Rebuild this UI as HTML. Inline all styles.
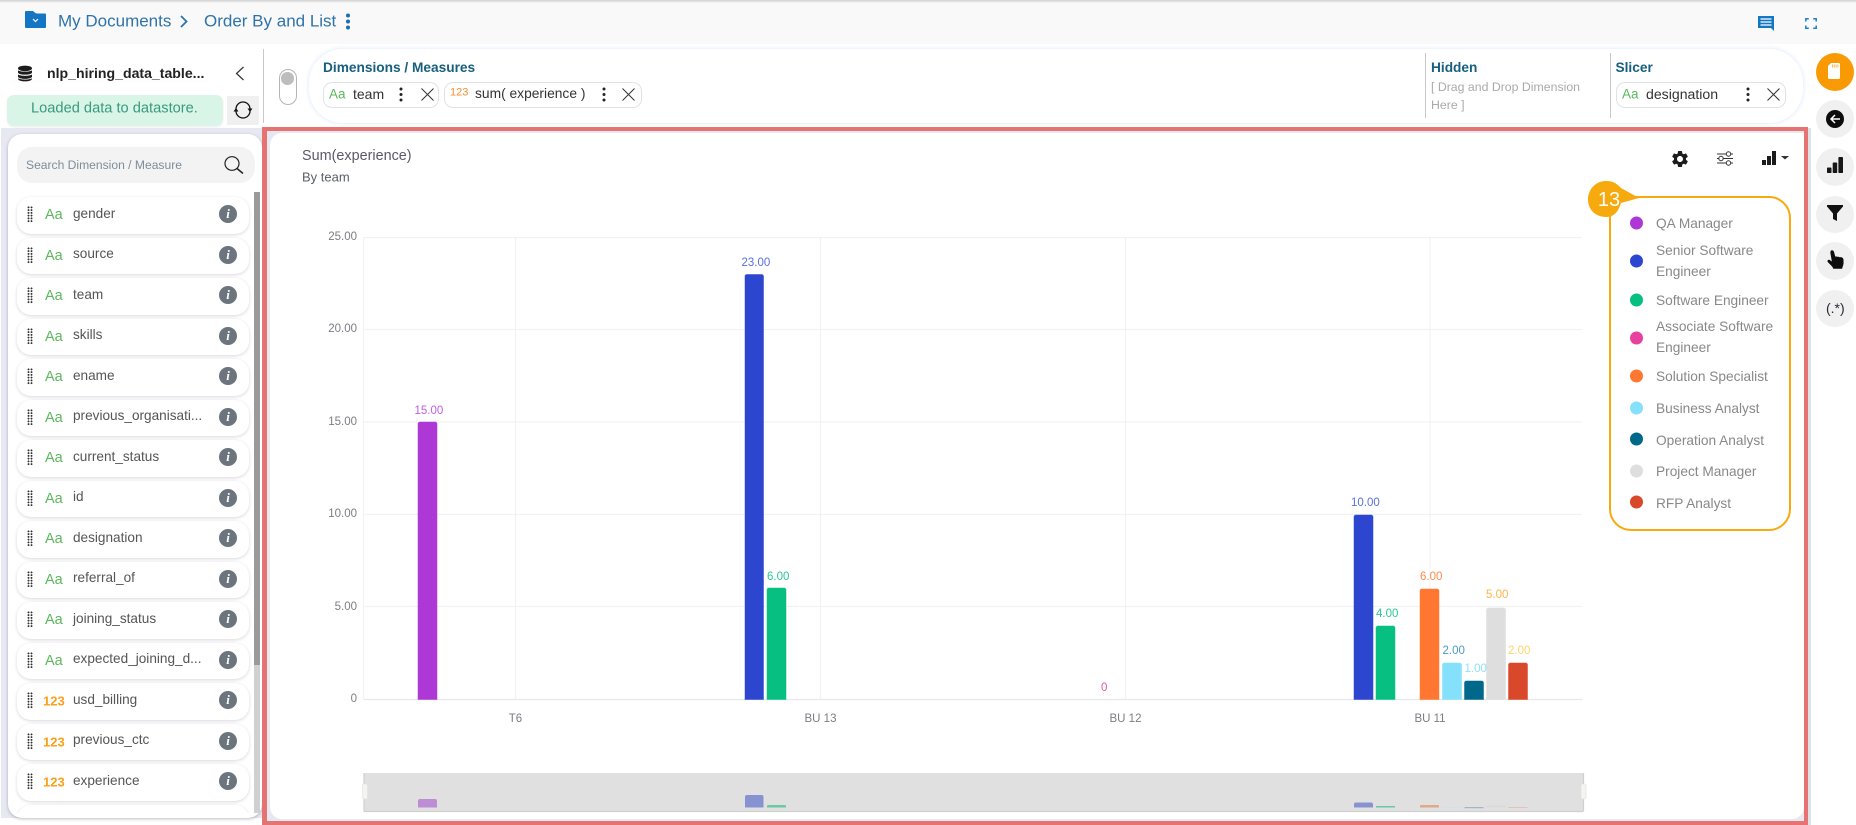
<!DOCTYPE html>
<html lang="en"><head><meta charset="utf-8"><title>Order By and List</title>
<style>
html,body{margin:0;padding:0;width:1856px;height:825px;overflow:hidden;background:#fff;font-family:"Liberation Sans",sans-serif}
.a{position:absolute}
.t{position:absolute;white-space:nowrap;line-height:1;transform:translateY(-50%)}
.chip{position:absolute;height:26px;top:82px;background:#fff;border:1px solid #dfe3e6;border-radius:9px;box-sizing:border-box}
.item{position:absolute;left:9px;width:232px;height:36.5px;background:#fff;border-radius:14px;box-shadow:0 1px 3px rgba(60,60,80,.2)}
.item .dots{position:absolute;left:10px;top:9px;width:6px;height:16.500px;background-image:radial-gradient(circle,#333 .85px,transparent 1.05px);background-size:3px 2.750px}
.item .ty{position:absolute;top:18px;transform:translateY(-50%);line-height:1}
.aa{left:28px;font-size:14.500px;color:#5cb85c}
.n{left:26px;font-size:13px;font-weight:bold;color:#f9a01b}
.item .nm{position:absolute;left:56px;top:16.500px;transform:translateY(-50%);font-size:13.600px;line-height:1;color:#555;white-space:nowrap}
.item .i{position:absolute;left:202px;top:8px;width:18px;height:18px;border-radius:50%;background:#6c757d;color:#fff;font:italic bold 13px/18px "Liberation Serif",serif;text-align:center}
.circ{position:absolute;left:1816px;width:38px;height:38px;border-radius:50%;background:#f0f0f0}
.lg{position:absolute;left:1656px;font-size:13.700px;line-height:1;color:#888;white-space:nowrap;transform:translateY(-50%)}
.dot{position:absolute;left:1630px;width:13px;height:13px;border-radius:50%;transform:translateY(-50%)}
</style></head><body>

<!-- top bar -->
<div class="a" style="left:0;top:0;width:1856px;height:44px;background:#f9f9f9"></div>
<div class="a" style="left:0;top:0;width:1856px;height:3px;background:linear-gradient(#cfcfcf,#f9f9f9)"></div>
<svg class="a" style="left:25px;top:11px" width="21" height="17" viewBox="0 0 21 17"><path d="M1 0h7l3 2.500h9a1 1 0 0 1 1 1V16a1 1 0 0 1-1 1H1a1 1 0 0 1-1-1V1a1 1 0 0 1 1-1z" fill="#1376c4"/><path d="M8 8l2.500 2.500L13 8" fill="none" stroke="#fff" stroke-width="1.200"/></svg>
<div class="t" style="left:58px;top:21px;font-size:17px;color:#2e73ab">My Documents</div>
<svg class="a" style="left:180px;top:15px" width="8" height="13" viewBox="0 0 8 13"><path d="M1 1l5.500 5.500L1 12" fill="none" stroke="#2e73ab" stroke-width="1.800"/></svg>
<div class="t" style="left:204px;top:21px;font-size:17px;color:#2e73ab">Order By and List</div>
<svg class="a" style="left:345px;top:13px" width="6" height="17" viewBox="0 0 6 17"><circle cx="3" cy="2.500" r="2" fill="#1a6fb0"/><circle cx="3" cy="8.500" r="2" fill="#1a6fb0"/><circle cx="3" cy="14.500" r="2" fill="#1a6fb0"/></svg>
<svg class="a" style="left:1758px;top:16px" width="16" height="15" viewBox="0 0 16 15"><path d="M0 0h16v15l-3-3H0z" fill="#1377c4"/><path d="M2.500 3h11M2.500 6h11M2.500 9h11" stroke="#fff" stroke-width="1.200"/></svg>
<svg class="a" style="left:1805px;top:18px" width="12" height="11" viewBox="0 0 12 11"><path d="M.8 3.500V.8h3M8.200.8h3v2.700M11.200 7.500v2.700h-3M3.800 10.200h-3V7.500" fill="none" stroke="#1e7fd0" stroke-width="1.500"/></svg>

<!-- left header -->
<svg class="a" style="left:17.500px;top:65px" width="14" height="17" viewBox="0 0 15 17"><ellipse cx="7.500" cy="3" rx="7.500" ry="3" fill="#1c1c1c"/><path d="M0 5c1.500 2 13.500 2 15 0v2.500c-1 3-14 3-15 0zM0 9.500c1.500 2 13.500 2 15 0V12c-1 3-14 3-15 0z" fill="#1c1c1c"/><path d="M0 13.500c1.500 2 13.500 2 15 0V14c0 4-15 4-15 0z" fill="#1c1c1c"/></svg>
<div class="t" style="left:47px;top:73px;font-size:14.100px;font-weight:bold;color:#222">nlp_hiring_data_table...</div>
<svg class="a" style="left:235px;top:66px" width="10" height="15" viewBox="0 0 10 15"><path d="M8.500 1L1.500 7.500l7 6.500" fill="none" stroke="#333" stroke-width="1.200"/></svg>
<div class="a" style="left:6.500px;top:95px;width:216.500px;height:30.500px;border-radius:7px;background:#d8f5e8;box-shadow:0 1px 2px rgba(0,0,0,.08)"></div>
<div class="t" style="left:31px;top:109px;font-size:14.650px;color:#3a9a7c">Loaded data to datastore.</div>
<div class="a" style="left:227px;top:96px;width:32px;height:29px;background:#f0f0f0"></div>
<svg class="a" style="left:234px;top:101.500px;overflow:visible" width="18" height="16" viewBox="0 0 18 16"><path d="M2 7A7 7 0 0 1 16 7M16 9A7 7 0 0 1 2 9" fill="none" stroke="#111" stroke-width="1.300"/><path d="M13.500 6.500h5L16 10zM-.5 9.500h5L2 6z" fill="#111"/></svg>
<div class="a" style="left:263px;top:49px;width:1px;height:74px;background:#c9c9c9"></div>

<!-- toggle -->
<div class="a" style="left:278.500px;top:69px;width:18px;height:36px;border:1px solid #b5b5b5;border-radius:9px;box-sizing:border-box;background:#fff"></div>
<div class="a" style="left:281px;top:72px;width:12.500px;height:12.500px;border-radius:50%;background:#bdbdbd"></div>

<!-- drop panel -->
<div class="a" style="left:309px;top:49px;width:1494px;height:74px;border-radius:34px;background:#fff;box-shadow:0 0 4px 1px #e6eefa"></div>
<div class="t" style="left:323px;top:68px;font-size:13.700px;font-weight:bold;color:#17607f">Dimensions / Measures</div>
<div class="chip" style="left:323px;width:116px"></div>
<div class="t" style="left:329px;top:94px;font-size:13.500px;color:#5cb85c">Aa</div>
<div class="t" style="left:353px;top:94px;font-size:14px;color:#333">team</div>
<svg class="a" style="left:399px;top:87px" width="4" height="15" viewBox="0 0 4 15"><circle cx="2" cy="2" r="1.500" fill="#222"/><circle cx="2" cy="7.500" r="1.500" fill="#222"/><circle cx="2" cy="13" r="1.500" fill="#222"/></svg>
<svg class="a" style="left:421px;top:88px" width="13" height="13" viewBox="0 0 13 13"><path d="M.5.5l12 12M12.500.5l-12 12" stroke="#333" stroke-width="1"/></svg>
<div class="chip" style="left:444px;width:198px"></div>
<div class="t" style="left:450px;top:92.500px;font-size:11px;color:#f98c34">123</div>
<div class="t" style="left:475px;top:94px;font-size:13.800px;color:#333">sum( experience )</div>
<svg class="a" style="left:602px;top:87px" width="4" height="15" viewBox="0 0 4 15"><circle cx="2" cy="2" r="1.500" fill="#222"/><circle cx="2" cy="7.500" r="1.500" fill="#222"/><circle cx="2" cy="13" r="1.500" fill="#222"/></svg>
<svg class="a" style="left:622px;top:88px" width="13" height="13" viewBox="0 0 13 13"><path d="M.5.5l12 12M12.500.5l-12 12" stroke="#333" stroke-width="1"/></svg>

<div class="a" style="left:1425px;top:53px;width:1px;height:65px;background:#c8c8c8"></div>
<div class="t" style="left:1431px;top:68px;font-size:13.700px;font-weight:bold;color:#17607f">Hidden</div>
<div class="t" style="left:1431px;top:87px;font-size:12.300px;color:#aaa">[ Drag and Drop Dimension</div>
<div class="t" style="left:1431px;top:105px;font-size:12.300px;color:#aaa">Here ]</div>
<div class="a" style="left:1610px;top:53px;width:1px;height:65px;background:#c8c8c8"></div>
<div class="t" style="left:1615.500px;top:68px;font-size:13.700px;font-weight:bold;color:#17607f">Slicer</div>
<div class="chip" style="left:1615.500px;width:170.500px"></div>
<div class="t" style="left:1622px;top:94px;font-size:13.500px;color:#5cb85c">Aa</div>
<div class="t" style="left:1646px;top:93.500px;font-size:14.100px;color:#333">designation</div>
<svg class="a" style="left:1746px;top:87px" width="4" height="15" viewBox="0 0 4 15"><circle cx="2" cy="2" r="1.500" fill="#222"/><circle cx="2" cy="7.500" r="1.500" fill="#222"/><circle cx="2" cy="13" r="1.500" fill="#222"/></svg>
<svg class="a" style="left:1767px;top:88px" width="13" height="13" viewBox="0 0 13 13"><path d="M.5.5l12 12M12.500.5l-12 12" stroke="#333" stroke-width="1"/></svg>

<!-- left fields panel -->
<div class="a" style="left:1px;top:128px;width:262px;height:690px;background:#e6e8f2"></div>
<div class="a" style="left:8px;top:134px;width:254px;height:684px;background:#fff;border-radius:14px;box-shadow:0 1px 3px rgba(70,70,90,.35);overflow:hidden">
 <div class="a" style="left:9px;top:13px;width:238px;height:36px;background:#f3f3f3;border-radius:15px"></div>
 <div class="t" style="left:18px;top:31px;font-size:12.100px;color:#7f8c99">Search Dimension / Measure</div>
 <svg class="a" style="left:216px;top:22px" width="20" height="18" viewBox="0 0 20 18"><ellipse cx="8" cy="7.500" rx="7" ry="6.800" fill="none" stroke="#222" stroke-width="1.200"/><path d="M13 12.500l6 5" stroke="#222" stroke-width="1.500"/></svg>
 <div class="a" style="left:246px;top:58px;width:6px;height:621px;background:#d0d0d0"></div>
 <div class="a" style="left:246px;top:58px;width:6px;height:473px;background:#9a9a9a"></div>
 <div class="a" style="left:0;top:0;width:246px;height:679px;overflow:hidden">
  <div class="item" style="top:63px"><span class="dots"></span><span class="ty aa">Aa</span><span class="nm">gender</span><span class="i">i</span></div>
  <div class="item" style="top:103.500px"><span class="dots"></span><span class="ty aa">Aa</span><span class="nm">source</span><span class="i">i</span></div>
  <div class="item" style="top:144px"><span class="dots"></span><span class="ty aa">Aa</span><span class="nm">team</span><span class="i">i</span></div>
  <div class="item" style="top:184.500px"><span class="dots"></span><span class="ty aa">Aa</span><span class="nm">skills</span><span class="i">i</span></div>
  <div class="item" style="top:225px"><span class="dots"></span><span class="ty aa">Aa</span><span class="nm">ename</span><span class="i">i</span></div>
  <div class="item" style="top:265.500px"><span class="dots"></span><span class="ty aa">Aa</span><span class="nm">previous_organisati...</span><span class="i">i</span></div>
  <div class="item" style="top:306px"><span class="dots"></span><span class="ty aa">Aa</span><span class="nm">current_status</span><span class="i">i</span></div>
  <div class="item" style="top:346.500px"><span class="dots"></span><span class="ty aa">Aa</span><span class="nm">id</span><span class="i">i</span></div>
  <div class="item" style="top:387px"><span class="dots"></span><span class="ty aa">Aa</span><span class="nm">designation</span><span class="i">i</span></div>
  <div class="item" style="top:427.500px"><span class="dots"></span><span class="ty aa">Aa</span><span class="nm">referral_of</span><span class="i">i</span></div>
  <div class="item" style="top:468px"><span class="dots"></span><span class="ty aa">Aa</span><span class="nm">joining_status</span><span class="i">i</span></div>
  <div class="item" style="top:508.500px"><span class="dots"></span><span class="ty aa">Aa</span><span class="nm">expected_joining_d...</span><span class="i">i</span></div>
  <div class="item" style="top:549px"><span class="dots"></span><span class="ty n">123</span><span class="nm">usd_billing</span><span class="i">i</span></div>
  <div class="item" style="top:589.500px"><span class="dots"></span><span class="ty n">123</span><span class="nm">previous_ctc</span><span class="i">i</span></div>
  <div class="item" style="top:630px"><span class="dots"></span><span class="ty n">123</span><span class="nm">experience</span><span class="i">i</span></div>
  <div class="item" style="top:670.500px"><span class="i"></span></div>
 </div>
</div>

<!-- red frame and chart card -->
<div class="a" style="left:1808px;top:128px;width:3px;height:697px;background:#dde1ec"></div>
<div class="a" style="left:262px;top:127px;width:1546px;height:698px;box-sizing:border-box;border:solid #e77272;border-width:4px 4.500px 4.500px 5px;background:#e6e8f2"></div>
<div class="a" style="left:270px;top:133px;width:1534px;height:686px;background:#fff;border-radius:12px 0 12px 12px"></div>
<div class="t" style="left:302px;top:156px;font-size:14.400px;color:#5a5a6a">Sum(experience)</div>
<div class="t" style="left:302px;top:177px;font-size:13px;color:#5a6068">By team</div>

<svg class="a" style="left:0;top:0;pointer-events:none" width="1856" height="825" viewBox="0 0 1856 825" font-family="Liberation Sans, sans-serif">
 <g stroke="#f2f2f2" stroke-width="1.200" fill="none">
  <path d="M363.500 237.500H1582M363.500 329.500H1582M363.500 422H1582M363.500 514.500H1582M363.500 606.500H1582"/>
  <path d="M363.500 237V699M515.500 237V699M820.500 237V699M1125.500 237V699M1430 237V699"/>
  <path d="M363.500 699.500H1582" stroke="#e8e8e8"/>
 </g>
 <g font-size="11.500" fill="#7c7c84" text-anchor="end">
  <text x="357" y="240">25.00</text><text x="357" y="332">20.00</text><text x="357" y="425">15.00</text><text x="357" y="517">10.00</text><text x="357" y="610">5.00</text><text x="357" y="702">0</text>
 </g>
 <g font-size="11.500" fill="#7c7c84" text-anchor="middle">
  <text x="515.500" y="722">T6</text><text x="820.500" y="722">BU 13</text><text x="1125.500" y="722">BU 12</text><text x="1430" y="722">BU 11</text>
 </g>
 <g stroke-width="1" stroke-opacity=".5">
  <path d="M418 699.500V424a2 2 0 0 1 2-2h15a2 2 0 0 1 2 2v275.500z" fill="#ae38d6" stroke="#ae38d6"/>
  <path d="M745 699.500V276.500a2 2 0 0 1 2-2h14.500a2 2 0 0 1 2 2v423z" fill="#2c46cf" stroke="#2c46cf"/>
  <path d="M767 699.500V590a2 2 0 0 1 2-2h15a2 2 0 0 1 2 2v109.500z" fill="#07bf80" stroke="#07bf80"/>
  <path d="M1354 699.500V517a2 2 0 0 1 2-2h15a2 2 0 0 1 2 2v182.500z" fill="#2c46cf" stroke="#2c46cf"/>
  <path d="M1376 699.500V628a2 2 0 0 1 2-2h15a2 2 0 0 1 2 2v71.500z" fill="#07bf80" stroke="#07bf80"/>
  <path d="M1420 699.500V591a2 2 0 0 1 2-2h15a2 2 0 0 1 2 2v108.500z" fill="#ff7731" stroke="#ff7731"/>
  <path d="M1442.500 699.500V665a2 2 0 0 1 2-2h15a2 2 0 0 1 2 2v34.500z" fill="#85e0fc" stroke="#85e0fc"/>
  <path d="M1464.500 699.500V683a2 2 0 0 1 2-2h15a2 2 0 0 1 2 2v16.500z" fill="#00688b" stroke="#00688b"/>
  <path d="M1486.500 699.500V610a2 2 0 0 1 2-2h15a2 2 0 0 1 2 2v89.500z" fill="#dedede" stroke="#dedede"/>
  <path d="M1508.500 699.500V665a2 2 0 0 1 2-2h15a2 2 0 0 1 2 2v34.500z" fill="#d9482a" stroke="#d9482a"/>
 </g>
 <g font-size="11.500">
  <text x="414.500" y="414" fill="#c060e0">15.00</text>
  <text x="741.500" y="266" fill="#5a70dc">23.00</text>
  <text x="767" y="580" fill="#2bc795">6.00</text>
  <text x="1101" y="691" fill="#e8559f">0</text>
  <text x="1351" y="506" fill="#5a70dc">10.00</text>
  <text x="1376" y="617" fill="#2bc795">4.00</text>
  <text x="1420" y="580" fill="#ff8a4f">6.00</text>
  <text x="1442.500" y="654" fill="#4a9acb">2.00</text>
  <text x="1464.500" y="672" fill="#8ee0fb">1.00</text>
  <text x="1486" y="598" fill="#ffb347">5.00</text>
  <text x="1508" y="654" fill="#ffd36b">2.00</text>
 </g>
 <!-- navigator -->
 <rect x="363.500" y="773" width="1220" height="38" fill="#e0e0e0"/>
 <path d="M363.500 811.500H1583.500M364 773V811M1583.500 773V811" stroke="#d0d0d0" stroke-width="1.200"/>
 <g>
  <path d="M418 807.500V801a2 2 0 0 1 2-2h15a2 2 0 0 1 2 2v6.500z" fill="#bd8ed4"/>
  <path d="M745 807.500V797a2 2 0 0 1 2-2h14.500a2 2 0 0 1 2 2v10.500z" fill="#8793d0"/>
  <path d="M767 807.500V806a1 1 0 0 1 1-1h17a1 1 0 0 1 1 1v1.500z" fill="#6cc9a5"/>
  <path d="M1354 807.500V804.500a2 2 0 0 1 2-2h15a2 2 0 0 1 2 2v3z" fill="#8793d0"/>
  <rect x="1376" y="806" width="19" height="1.500" fill="#6cc9a5"/>
  <path d="M1420 807.500V806a1 1 0 0 1 1-1h17a1 1 0 0 1 1 1v1.500z" fill="#e0a98a"/>
  <rect x="1442.500" y="807" width="19" height="1" fill="#cfe2e8"/>
  <rect x="1464.500" y="807" width="19" height="1.200" fill="#9bbbc4"/>
  <rect x="1486.500" y="805.500" width="19" height="2" fill="#dadada"/>
  <rect x="1508.500" y="807" width="19" height="1" fill="#e0c4bb"/>
 </g>
 <rect x="362.500" y="784" width="5" height="15" rx="1" fill="#f4f4f0" stroke="#ddd" stroke-width=".5"/>
 <rect x="1581" y="784" width="5" height="15" rx="1" fill="#f4f4f0" stroke="#ddd" stroke-width=".5"/>
 <!-- chart toolbar -->
 <svg x="1670" y="149" width="20" height="20" viewBox="0 0 24 24"><path fill="#1c1c1c" d="M19.140 12.940c.04-.3.06-.61.06-.94 0-.32-.02-.64-.07-.94l2.030-1.580c.18-.14.23-.41.12-.61l-1.920-3.320c-.12-.22-.37-.29-.59-.22l-2.390.96c-.5-.38-1.030-.7-1.620-.94l-.36-2.540c-.04-.24-.24-.41-.48-.41h-3.840c-.24 0-.43.17-.47.41l-.36 2.540c-.59.24-1.130.57-1.620.94l-2.390-.96c-.22-.08-.47 0-.59.22L2.740 8.870c-.12.21-.08.47.12.61l2.030 1.580c-.05.3-.09.63-.09.94s.02.64.07.94l-2.030 1.580c-.18.14-.23.41-.12.61l1.920 3.320c.12.22.37.29.59.22l2.390-.96c.5.38 1.030.7 1.620.94l.36 2.540c.05.24.24.41.48.41h3.840c.24 0 .44-.17.47-.41l.36-2.540c.59-.24 1.130-.56 1.620-.94l2.390.96c.22.08.47 0 .59-.22l1.920-3.320c.12-.22.07-.47-.12-.61l-2.010-1.580zM12 15.600c-1.980 0-3.600-1.620-3.600-3.600s1.620-3.600 3.600-3.600 3.600 1.620 3.600 3.600-1.620 3.600-3.600 3.600z"/></svg>
 <g fill="none" stroke="#333" stroke-width="1">
  <path d="M1717 154h9.500M1731 154h2M1717 158.500h2M1723.500 158.500h9.500M1717 163h9.500M1731 163h2"/>
  <circle cx="1728.500" cy="154" r="2.200"/><circle cx="1721" cy="158.500" r="2.200"/><circle cx="1728.500" cy="163" r="2.200"/>
 </g>
 <path d="M1762 160h4v5h-4zM1767 156h4v9h-4zM1772 151h4v14h-4z" fill="#1c1c1c"/>
 <path d="M1781 156h8l-4 3.500z" fill="#333"/>
</svg>

<!-- legend -->
<div class="a" style="left:1609px;top:195.500px;width:181.500px;height:335px;box-sizing:border-box;border:2.500px solid #f8a90d;border-radius:22px;background:#fff"></div>
<svg class="a" style="left:1588px;top:181px" width="52" height="37" viewBox="0 0 52 37"><path d="M0 18.500C0 8 8 0 18 0c8 0 11 3 15 7l18 10-18 5C30 32 25 36 18 36 8 36 0 29 0 18.500z" fill="#f7aa0e"/><text x="21" y="25" text-anchor="middle" font-family="Liberation Sans, sans-serif" font-size="20" fill="#fff">13</text></svg>
<span class="dot" style="top:223px;background:#ae38d6"></span><div class="lg" style="top:224px">QA Manager</div>
<span class="dot" style="top:261px;background:#2c46cf"></span><div class="lg" style="top:251px">Senior Software</div><div class="lg" style="top:271.500px">Engineer</div>
<span class="dot" style="top:300px;background:#07bf80"></span><div class="lg" style="top:300.500px">Software Engineer</div>
<span class="dot" style="top:338px;background:#e8409f"></span><div class="lg" style="top:327px">Associate Software</div><div class="lg" style="top:347.500px">Engineer</div>
<span class="dot" style="top:376px;background:#ff7731"></span><div class="lg" style="top:377px">Solution Specialist</div>
<span class="dot" style="top:408px;background:#85e0fc"></span><div class="lg" style="top:408.500px">Business Analyst</div>
<span class="dot" style="top:439px;background:#00688b"></span><div class="lg" style="top:440.500px">Operation Analyst</div>
<span class="dot" style="top:471px;background:#dedede"></span><div class="lg" style="top:471.500px">Project Manager</div>
<span class="dot" style="top:502px;background:#d9482a"></span><div class="lg" style="top:503.500px">RFP Analyst</div>

<!-- right rail -->
<div class="circ" style="top:53px;background:#f99a05"></div>
<svg class="a" style="left:1827.500px;top:63px" width="12" height="16" viewBox="0 0 12 16"><path d="M3 0h7.500A1.500 1.500 0 0 1 12 1.500v13a1.500 1.500 0 0 1-1.500 1.500h-9A1.500 1.500 0 0 1 0 14.500V3z" fill="#fff"/><path d="M4.500 1.500v3M6.300 1.500v3M8.100 1.500v3M9.900 1.500v3" stroke="#f7b95a" stroke-width="1"/></svg>
<div class="circ" style="top:100px"></div>
<svg class="a" style="left:1826px;top:110px" width="18" height="18" viewBox="0 0 18 18"><circle cx="9" cy="9" r="9" fill="#0d0d0d"/><path d="M14 9H5M9 5L5 9l4 4" fill="none" stroke="#fff" stroke-width="1.500"/></svg>
<div class="circ" style="top:148px"></div>
<svg class="a" style="left:1827px;top:157px" width="16" height="16" viewBox="0 0 16 16"><rect x="0" y="10.500" width="4.500" height="5.500" rx=".8" fill="#171717"/><rect x="5.700" y="5.500" width="4.500" height="10.500" rx=".8" fill="#171717"/><rect x="11.400" y="0" width="4.600" height="16" rx=".8" fill="#171717"/></svg>
<div class="circ" style="top:196px;height:37px"></div>
<svg class="a" style="left:1827px;top:205px" width="16" height="16" viewBox="0 0 16 16"><path d="M0 0h16v1.500L10 8.500V16l-4-2V8.500L0 1.500z" fill="#111"/></svg>
<div class="circ" style="top:242px"></div>
<svg class="a" style="left:1827px;top:250px" width="17.500" height="19" viewBox="0 0 18 19"><path d="M5 0c1.200 0 2 .8 2.300 2L8.500 6.500l1-.2 1 .5 1.200-.3 1.300.7 1.500-.1c1.500.2 2.500 1.400 2.500 3V14l-1.500 5H6.500L5.500 17 1 12.300c-.7-.8-.7-1.700 0-2.200.8-.6 1.800-.3 2.700.5L5 11.500 3.500 3C3.300 1.300 4 0 5 0z" fill="#0d0d0d"/></svg>
<div class="circ" style="top:290px;height:37px"></div>
<div class="t" style="left:1826px;top:307.500px;font-size:14px;color:#2a2a3a">(.*)</div>

</body></html>
